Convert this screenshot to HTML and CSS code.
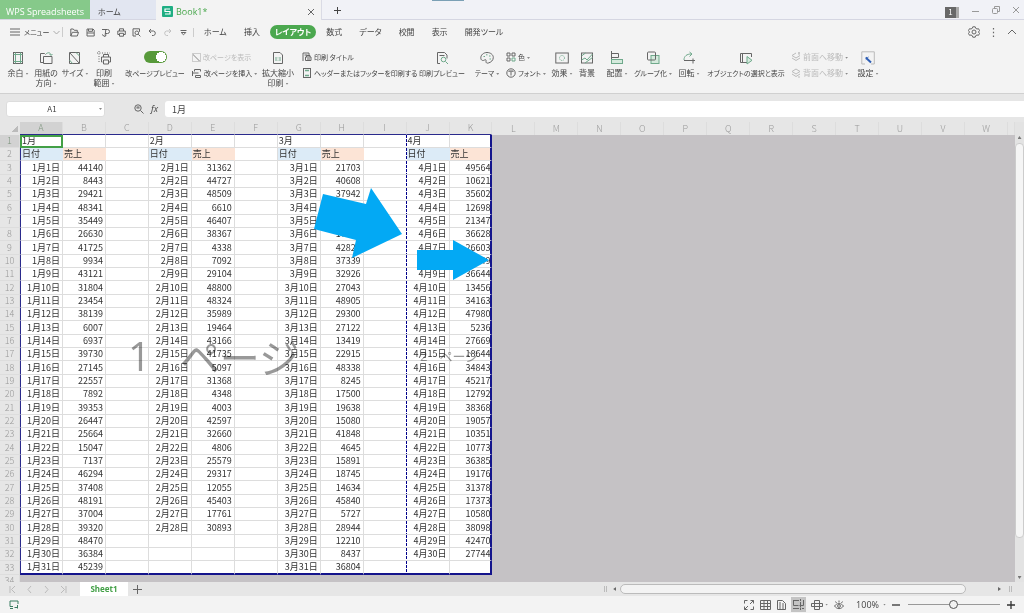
FILE: index.html
```html
<!DOCTYPE html>
<html lang="ja">
<head>
<meta charset="utf-8">
<meta name="viewport" content="width=device-width, initial-scale=1">
<title>Book1 - WPS Spreadsheets</title>
<link rel="stylesheet" href="styles.css">
</head>
<body>
<header class="titlebar">
  <button class="app-tab">WPS Spreadsheets</button>
  <button class="home-tab">ホーム</button>
  <div class="doc-tab">
    <svg class="doc-logo" width="11" height="11" viewBox="0 0 11 11"><rect width="11" height="11" rx="1" fill="#1fae83"/><path d="M8 3H3v2.500h5V8H3" fill="none" stroke="#fff" stroke-width="1.200"/></svg>
    <span>Book1*</span>
    <button class="icon-btn doc-close" aria-label="閉じる"><svg width="8" height="8" viewBox="0 0 8 8"><path d="M1 1l6 6M7 1L1 7"/></svg></button>
  </div>
  <button class="icon-btn new-tab" aria-label="新規タブ"><svg width="9" height="9" viewBox="0 0 9 9"><path d="M4.500 1v7M1 4.500h7" stroke="#444"/></svg></button>
  <div class="drag-area"><i class="drag-mark"></i></div>
  <div class="window-controls">
    <span class="badge">1</span>
    <button class="icon-btn" aria-label="最小化"><svg width="8" height="8" viewBox="0 0 8 8"><path d="M0 5.500h7"/></svg></button>
    <button class="icon-btn" aria-label="元に戻す"><svg width="8" height="8" viewBox="0 0 8 8"><rect x=".5" y="2.500" width="5" height="5" rx="1"/><path d="M2.500 2V.5h5v5H6"/></svg></button>
    <button class="icon-btn" aria-label="ウィンドウを閉じる"><svg width="8" height="8" viewBox="0 0 8 8"><path d="M1 1l6 6M7 1L1 7"/></svg></button>
  </div>
</header>

<nav class="menubar">
  <button class="menu-btn"><svg width="10" height="8" viewBox="0 0 10 8"><path d="M0 1h10M0 4h10M0 7h10"/></svg>メニュー<svg class="pale" width="7" height="5" viewBox="0 0 7 5"><path d="M.5 1l3 3 3-3"/></svg></button>
  <div class="quick">
    <button class="icon-btn" aria-label="開く"><svg width="9" height="9" viewBox="0 0 9 9"><path d="M.8 8V1h2.500l1 1.300h3v2M.8 8l1.500-3.700h6.200L7.300 8z"/></svg></button>
    <button class="icon-btn" aria-label="保存"><svg width="9" height="9" viewBox="0 0 9 9"><path d="M1 1h6l1.200 1.200V8H1zM2.500 1v2.300h4V1M1 5h7"/></svg></button>
    <button class="icon-btn" aria-label="PDF出力"><svg width="9" height="9" viewBox="0 0 9 9"><path d="M1 1.500h5.500a1.500 1.500 0 010 4H4M4 8.500l.8-7M1 6.500l2.500 2L5.500 7"/></svg></button>
    <button class="icon-btn" aria-label="印刷"><svg width="9" height="9" viewBox="0 0 9 9"><path d="M2.500 3V.8h4V3M2 6.500H.8V3h7.500v3.500H7M2.500 5.300h4V8.200h-4z"/></svg></button>
    <button class="icon-btn" aria-label="印刷プレビュー"><svg width="9" height="9" viewBox="0 0 9 9"><path d="M4 8H1V.8h6.500v3"/><circle cx="4.800" cy="4.800" r="1.800"/><path d="M6.200 6.200L8.400 8.400"/></svg></button>
    <button class="icon-btn" aria-label="元に戻す操作"><svg width="9" height="9" viewBox="0 0 9 9"><path d="M3 1L1 3l2 2M1 3h4.500a2.300 2.300 0 010 4.500H4"/></svg></button>
    <button class="icon-btn faint" aria-label="やり直し"><svg width="9" height="9" viewBox="0 0 9 9"><path d="M6 1l2 2-2 2M8 3H3.500a2.300 2.300 0 000 4.500H5"/></svg></button>
    <button class="icon-btn" aria-label="カスタマイズ"><svg width="9" height="9" viewBox="0 0 9 9"><path d="M1.500 2.500h6M2.200 4.500h4.600L4.500 6.800z"/></svg></button>
  </div>
  <div class="tabs">
    <button>ホーム</button><button>挿入</button><button class="on">レイアウト</button><button>数式</button><button>データ</button><button>校閲</button><button>表示</button><button>開発ツール</button>
  </div>
  <div class="menu-right">
    <button class="icon-btn" aria-label="設定"><svg width="12" height="12" viewBox="0 0 12 12"><path d="M4.800.8h2.400l.5 1.500 1.300.7 1.500-.3 1 1.800L10.500 6l1 1.500-1 1.800L9 9l-1.300.7-.5 1.500H4.800l-.5-1.500L3 9l-1.500.3-1-1.800L1.500 6l-1-1.500 1-1.800L3 3l1.300-.7z"/><circle cx="6" cy="6" r="2"/></svg></button>
    <button class="icon-btn" aria-label="その他"><svg width="3" height="9" viewBox="0 0 3 9"><path d="M1.500 0v9" stroke-width="1.200" stroke-dasharray="1.500 2.200"/></svg></button>
    <button class="icon-btn" aria-label="リボンを折りたたむ"><svg width="10" height="6" viewBox="0 0 10 6"><path d="M1 5l4-4 4 4"/></svg></button>
  </div>
</nav>

<section class="ribbon" aria-label="レイアウト">
  <button class="tool w28"><svg width="14" height="14" viewBox="0 0 14 14"><rect x="2.500" y="1.500" width="9" height="11"/><path class="g" d="M4.500 1.500v11M9.500 1.500v11M2.500 3.500h9M2.500 10.500h9"/></svg><span>余白<i class="car"></i></span></button>
  <button class="tool w28"><svg width="14" height="14" viewBox="0 0 14 14"><path d="M1.500 11.500V2.500h4l1 1M4.500 5.500h8.500v7H4.500zM1.500 11.500h3"/><path class="g" d="M7 3c2-2 4.500-1.500 5 1M10.500 3l1.500 1.500L13.500 3"/></svg><span>用紙の<br>方向<i class="car"></i></span></button>
  <button class="tool w30"><svg width="14" height="14" viewBox="0 0 14 14"><path d="M1.500 12.500v-11h10v11zM2 2l9 10"/><path class="g" d="M8 1.500l3.500 3.500M4.500 12.500L1.500 9"/></svg><span>サイズ<i class="car"></i></span></button>
  <button class="tool w28"><svg width="14" height="14" viewBox="0 0 14 14"><path d="M6.500 6V3.500h5V6M5.500 11h-1V6h9v5h-1.500M6.500 9h5v4h-5z"/><path d="M2 0v12M0 2h13" stroke-dasharray="1 1.500"/></svg><span>印刷<br>範囲<i class="car"></i></span></button>
  <label class="tool small w74"><input class="switch" type="checkbox" checked><span>改ページプレビュー</span></label>
  <div class="stack small w68">
    <label class="disabled"><input class="tick" type="checkbox" checked disabled><span>改ページを表示</span></label>
    <button><svg width="10" height="10" viewBox="0 0 10 10"><path d="M2.500 3.500v-2h6v2M.5 5h6M3.500 9.500v-2h5v2zM.5 3v5"/></svg><span>改ページを挿入<i class="car"></i></span></button>
  </div>
  <button class="tool w36"><svg width="14" height="14" viewBox="0 0 14 14"><path d="M2.500 1.500h6.500l2.500 2.500v8.500h-9z"/><path class="g" d="M5 6v4M9 6v4M7 6.500v.8M7 8.800v.8"/></svg><span>拡大縮小<br>印刷<i class="car"></i></span></button>
  <div class="stack small w120">
    <button><svg width="10" height="10" viewBox="0 0 10 10"><path d="M1 9V1h6v2M2.500 3h3M3.500 5h5.500v3.500H3.500zM4.500 5V3.500h3.500V5M5 7h3"/></svg><span>印刷 タイトル</span></button>
    <button><svg width="10" height="10" viewBox="0 0 10 10"><rect x="1.500" y=".5" width="7" height="9"/><path class="g" d="M3 2.500h4M3 7.500h4" stroke-width="1.500"/></svg><span>ヘッダーまたはフッターを印刷する</span></button>
  </div>
  <button class="tool small w52"><svg width="14" height="14" viewBox="0 0 14 14"><path d="M5 12.500H2.500v-11h7l2.500 2.500v3.500M4.500 4.500h5"/><path class="g" d="M10.500 10.500l2.500 2.500"/><circle class="g" cx="8.500" cy="8.500" r="2.300"/></svg><span>印刷プレビュー</span></button>
  <button class="tool small w38"><svg width="14" height="14" viewBox="0 0 14 14"><path d="M7 1.500C3.500 1.500.8 4 .8 6.800S3 10 4.500 9s1.800.3 1.500 1.500 1 2 2.300 1.500c2.700-.6 5-2.700 5-5.500S10.500 1.500 7 1.500z"/><path class="g" d="M3.500 5.500h1.500M6 3.800h1.500M9 5h1.500M9.500 8H11"/></svg><span>テーマ<i class="car"></i></span></button>
  <div class="stack small w44">
    <button><svg width="10" height="10" viewBox="0 0 10 10"><path d="M1 1h3v3H1zM6 1h3v3H6zM1 6h3v3H1z"/><path class="g" d="M6 6h3v3H6z"/></svg><span>色<i class="car"></i></span></button>
    <button><svg width="10" height="10" viewBox="0 0 10 10"><circle cx="5" cy="5" r="4.200"/><path d="M3 4V3h4v1M5 3v4.500"/></svg><span>フォント<i class="car"></i></span></button>
  </div>
  <button class="tool w24"><svg width="14" height="14" viewBox="0 0 14 14"><rect x=".8" y="2" width="12.500" height="10"/><circle class="g" cx="7" cy="7" r="2.500" stroke-dasharray="1 1"/></svg><span>効果<i class="car"></i></span></button>
  <button class="tool w26"><svg width="14" height="14" viewBox="0 0 14 14"><rect x="1.500" y="2" width="11" height="10"/><path class="g" d="M1.500 5l4-3M1.500 9l3.500-2 2 2 5.500-6M5 12l7.500-5.500"/></svg><span>背景</span></button>
  <button class="tool w34"><svg width="14" height="14" viewBox="0 0 14 14"><path d="M1.500 0v13M1.500 2.500h7v4h-7"/><rect class="gf" x="1.500" y="8.500" width="11" height="4"/></svg><span>配置<i class="car"></i></span></button>
  <button class="tool small w38"><svg width="14" height="14" viewBox="0 0 14 14"><rect class="gf" x="5" y="4.500" width="8" height="8"/><rect x="1.500" y="1" width="8" height="8" rx="1"/></svg><span>グループ化<i class="car"></i></span></button>
  <button class="tool w34"><svg width="14" height="14" viewBox="0 0 14 14"><path d="M2 9.500h11M11 7.500v5"/><path class="g" d="M2 9c0-4 3-6 7-6M7.500 1L10 3 7.500 5.500"/></svg><span>回転<i class="car"></i></span></button>
  <button class="tool small w80"><svg width="14" height="14" viewBox="0 0 14 14"><path d="M8 11.500H1.500v-9h11V6M3.500 2.500v9"/><path class="gf" d="M8 5.500v7.500l5-3.700z"/></svg><span>オブジェクトの選択と表示</span></button>
  <div class="stack w66 disabled">
    <button disabled><svg width="10" height="10" viewBox="0 0 10 10"><path d="M5 1L1 3.500l4 2.500 4-2.500M1 6l4 2.500L9 6M7 1h2M8 0v3"/></svg><span>前面へ移動<i class="car"></i></span></button>
    <button disabled><svg width="10" height="10" viewBox="0 0 10 10"><path d="M5 1L1 3.500l4 2.500 4-2.500zM1 6l4 2.500L9 6M7 9h2"/></svg><span>背面へ移動<i class="car"></i></span></button>
  </div>
  <button class="tool w32"><svg width="14" height="14" viewBox="0 0 14 14"><path d="M4 13H.8V.8h12.500V13H10" stroke="#bbb"/><path d="M4.800 6.300l1.500 1.700L10 11.500" stroke="#2f5fb5" stroke-width="2"/><path d="M7.500 6L4.800 8.500" stroke="#2f5fb5"/></svg><span>設定<i class="car"></i></span></button>
</section>

<div class="formula">
  <label class="namebox"><input value="A1" aria-label="名前ボックス"><i class="car"></i></label>
  <div class="fx">
    <button class="icon-btn" aria-label="検索"><svg width="10" height="10" viewBox="0 0 10 10"><circle cx="4" cy="4" r="3.200"/><path d="M6.500 6.500l3 3M2.500 4h3M2.500 3h3"/></svg></button>
    <button class="fx-btn">fx</button>
  </div>
  <input class="formula-input" value="1月" aria-label="数式バー">
</div>

<main class="sheet">
  <div class="grid-area">
    <table class="grid" id="grid"></table>
    <div class="mark mark-big"><span class="digit">1</span><span>ページ</span></div>
    <div class="mark mark-small"><span class="digit">2</span><span>ページ</span></div>
    <svg class="arrows" width="492" height="180" viewBox="0 0 492 180"><path d="M323 72L366 82L371 66L402 112L352 136L356 118L314 107zM417 128h36v-10l36 20-36 20v-10h-36z"/></svg>
  </div>
  <div class="vscroll"><i class="up"></i><div class="vthumb"></div><i class="down"></i></div>
</main>

<div class="sheetbar">
  <div class="sheet-nav">
    <button class="icon-btn" aria-label="最初"><svg width="7" height="9" viewBox="0 0 7 9"><path d="M1 1v7M6 1L2.500 4.500 6 8"/></svg></button>
    <button class="icon-btn" aria-label="前"><svg width="7" height="9" viewBox="0 0 7 9"><path d="M5 1L2 4.500 5 8"/></svg></button>
    <button class="icon-btn" aria-label="次"><svg width="7" height="9" viewBox="0 0 7 9"><path d="M2 1l3 3.500L2 8"/></svg></button>
    <button class="icon-btn" aria-label="最後"><svg width="7" height="9" viewBox="0 0 7 9"><path d="M1 1l3.500 3.500L1 8M6 1v7"/></svg></button>
  </div>
  <button class="sheet-tab">Sheet1</button>
  <button class="icon-btn add-sheet" aria-label="シートを追加"><svg width="9" height="9" viewBox="0 0 9 9"><path d="M4.500 0v9M0 4.500h9"/></svg></button>
  <div class="hscroll"><i class="grip"></i><i class="left"></i><div class="hthumb"></div><i class="right"></i><i class="grip"></i></div>
</div>

<footer class="status">
  <button class="icon-btn rec" aria-label="マクロ"><svg width="10" height="9" viewBox="0 0 10 9"><path d="M4 6.500H1V1h8v3M1 8.500h3M5.500 7.500h3M8.500 5v3.500" stroke="#3b7d62"/></svg></button>
  <div class="views">
    <button class="icon-btn" aria-label="全画面"><svg width="10" height="10" viewBox="0 0 10 10"><path d="M.5 3.500v-3h3M6.500.5h3v3M9.500 6.500v3h-3M3.500 9.500h-3v-3M9.500.5L6 4M.5 9.500L4 6"/></svg></button>
    <button class="icon-btn" aria-label="標準"><svg width="11" height="10" viewBox="0 0 11 10"><path d="M.5.5h10v9H.5zM.5 3.500h10M.5 6.500h10M4 .5v9M7.500.5v9"/></svg></button>
    <button class="icon-btn" aria-label="ページレイアウト"><svg width="9" height="10" viewBox="0 0 9 10"><path d="M.5.5h5l3 3v6h-8zM3 2v7.500M6 3v6.500"/></svg></button>
    <button class="icon-btn on" aria-label="改ページプレビュー表示"><svg width="11" height="11" viewBox="0 0 11 11"><path d="M.5 1v5.500h5M1 1.500h5M7.500 0v2M7.500 3v5M10.500 1v5.500H6.500M0 9.500h6M7.500 8.500V11M9 9.500h2"/></svg></button>
    <button class="icon-btn" aria-label="読み取りモード"><svg width="12" height="10" viewBox="0 0 12 10"><path d="M3.500.5h5v9h-5zM3.500 3.500H.5v3h3M8.500 3.500h3v3h-3M3.500 3.500h5M3.500 6.500h5"/></svg><i class="car"></i></button>
    <button class="icon-btn" aria-label="目の保護モード"><svg width="10" height="10" viewBox="0 0 10 10"><path d="M.5 6C3 2.800 7 2.800 9.500 6 7 9.500 3 9.500.5 6zM1.500 1.500l1 1.500M5 .5v2M8.500 1.500l-1 1.500"/><circle cx="5" cy="6" r="1.400"/></svg></button>
  </div>
  <button class="zoom-val">100%<i class="car"></i></button>
  <button class="icon-btn" aria-label="縮小"><svg width="8" height="8" viewBox="0 0 8 8"><path d="M0 4h8" stroke="#333" stroke-width="1.300"/></svg></button>
  <input class="zoom" type="range" min="0" max="100" value="49" aria-label="ズーム">
  <button class="icon-btn" aria-label="拡大"><svg width="8" height="8" viewBox="0 0 8 8"><path d="M0 4h8M4 0v8" stroke="#333" stroke-width="1.300"/></svg></button>
</footer>
<script src="app.js"></script>
</body>
</html>
```

FILE: styles.css
```css
* { box-sizing: border-box; }
html, body { height: 100%; }
body {
  margin: 0;
  display: flex;
  flex-direction: column;
  overflow: hidden;
  background: #e6e6e6;
  color: #444;
  font: 8px/10px "Noto Sans CJK JP", sans-serif;
}
button, input { font: inherit; color: inherit; margin: 0; padding: 0; border: 0; background: none; }
button { white-space: nowrap; }
svg { display: block; flex: none; fill: none; stroke: #666; stroke-width: 1; }
.icon-btn { display: flex; align-items: center; justify-content: center; }
svg .g { stroke: #6fa98b; }
svg .gf { stroke: #6fa98b; fill: #d5eadd; }
.car {
  display: inline-block;
  width: 3px;
  height: 2px;
  margin-left: 2px;
  vertical-align: middle;
  background: #888;
  clip-path: polygon(0 0, 100% 0, 50% 100%);
}

/* title bar */
.titlebar { flex: none; display: flex; height: 20px; background: #f1f2f7; border-bottom: 1px solid #d5d6e2; }
.app-tab { width: 90px; height: 19px; padding-top: 4px; background: #86c98a; color: #fff; font: 9px/12px "Open Sans", sans-serif; }
.home-tab { width: 66px; padding: 4px 0 0 8px; text-align: left; background: #e2e6f1; font-feature-settings: "palt"; }
.doc-tab {
  display: flex; align-items: center; gap: 3px; width: 166px; height: 20px; padding: 3px 6px 0;
  background: #f3f3f3; border-right: 1px solid #dadbe5; color: #4aa84e; font: 9px/12px "Open Sans", sans-serif;
}
.doc-logo { stroke: none; }
.doc-close { margin-left: auto; }
.new-tab { width: 30px; padding-top: 2px; }
.drag-area { flex: 1; padding-left: 80px; }
.drag-mark { display: block; width: 32px; height: 1px; background: #7ba0b5; }
.window-controls { display: flex; align-items: center; gap: 12px; padding-right: 4px; }
.window-controls svg { stroke: #999; }
.badge { width: 14px; height: 11px; margin: 5px 1px 0 0; background: #686868; border-right: 3px solid #aaa; color: #fff; text-align: center; }

/* menu bar */
.menubar { flex: none; display: flex; align-items: center; height: 24px; background: #f3f3f3; font-feature-settings: "palt"; }
.menu-btn { display: flex; align-items: center; gap: 4px; width: 63px; padding-left: 10px; border-right: 1px solid #ccc; font-size: 7px; }
.pale { stroke: #aaa; }
.quick { display: flex; justify-content: space-between; width: 131px; padding: 0 5px 0 7px; border-right: 1px solid #ccc; }
.faint { opacity: .35; }
.tabs { display: flex; align-items: center; gap: 17px; padding-left: 10px; }
.tabs .on { height: 14px; padding: 0 5px; margin: 0 -7px; border-radius: 7px; background: #4ba84f; color: #fff; font-weight: 700; }
.menu-right { display: flex; align-items: center; gap: 12px; margin-left: auto; padding-right: 7px; }

/* ribbon */
.ribbon { flex: none; display: flex; height: 50px; padding: 7px 0 0 4px; background: #f3f3f3; border-bottom: 1px solid #d0d0d0; font-feature-settings: "palt"; }
.tool { flex: none; display: flex; flex-direction: column; align-items: center; gap: 3px; text-align: center; white-space: nowrap; }
.stack { flex: none; display: flex; flex-direction: column; gap: 6px; padding-top: 1px; white-space: nowrap; }
.stack > * { display: flex; align-items: center; gap: 2px; height: 10px; }
.small { font-size: 7px; }
.disabled { color: #bbb; }
.disabled svg { stroke: #bbb; }
.w24 { width: 24px; } .w26 { width: 26px; } .w28 { width: 28px; } .w30 { width: 30px; }
.w32 { width: 32px; } .w34 { width: 34px; } .w36 { width: 36px; } .w38 { width: 38px; }
.w44 { width: 44px; } .w52 { width: 52px; } .w66 { width: 66px; padding-left: 5px; }
.w68 { width: 68px; } .w74 { width: 74px; } .w80 { width: 80px; } .w120 { width: 120px; padding-left: 6px; }
.switch { appearance: none; width: 23px; height: 12px; margin: 0 0 2px; border-radius: 6px; background: radial-gradient(circle at 17px 6px, #fff 5px, #57993a 5px); }
.tick { appearance: none; width: 9px; height: 9px; border: 1px solid #ccc; background: linear-gradient(45deg, transparent 40%, #bbb 40% 55%, transparent 55%); }

/* formula bar */
.formula { flex: none; display: flex; align-items: center; height: 28px; padding-top: 2px; }
.namebox { display: flex; align-items: center; width: 99px; height: 16px; margin-left: 6px; padding-right: 2px; background: #fff; border-radius: 3px; border: 1px solid #ddd; }
.namebox input { flex: 1; min-width: 0; text-align: center; }
.fx { display: flex; align-items: center; gap: 7px; width: 60px; padding-left: 29px; }
.fx-btn { font: italic 9px/12px "Open Sans", sans-serif; }
.formula-input { flex: 1; height: 16px; padding-left: 7px; background: #fff; border-radius: 3px 0 0 3px; font-size: 9px; }

/* sheet */
.sheet { flex: 1; min-height: 0; display: flex; overflow: hidden; }
.grid-area { position: relative; flex: 1; min-width: 0; overflow: hidden; background: #c5c2c5; }
.grid { width: 100%; table-layout: fixed; border-collapse: separate; border-spacing: 0; font-size: 9px; line-height: 12px; color: #333; }
.grid th, .grid td { padding: 0; height: 13px; overflow: hidden; white-space: nowrap; }
.grid tbody tr:nth-child(3n) > * { height: 14px; }
.col-num { width: 20px; }
.col-end { width: 7px; }
.grid th { background: #e6e6e6; color: #999; font-weight: 300; border-right: 1px solid #ddd; }
.grid thead th { font-size: 9px; }
.grid tbody th { border-bottom: 1px solid #ddd; }
.grid thead th.in { border-bottom: 1px solid #2a2a8c; }
.grid th.cur { background: #d2d2d2; color: #7d947d; }
.grid .corner { border: 0; background: linear-gradient(135deg, transparent 50%, #bbb 50%) 12px 4px / 6px 6px no-repeat #e6e6e6; }
.grid td.c { background: #fff; border-right: 1px solid #ddd; border-bottom: 1px solid #ddd; text-align: right; padding-right: 2px; }
.grid td.c.label { text-align: left; padding-left: 1px; }
.grid td.c.day { background: #dcebf7; border-right-color: #dcebf7; }
.grid td.c.sale { background: #fce4d6; border-right-color: #fce4d6; }
.grid td.c.first { border-left: 1px solid #2a2a8c; }
.grid td.c.brk { border-right: 0; background: repeating-linear-gradient(#00008b 0 3px, #fff 3px 4px) right / 1px 100% no-repeat #fff; }
.grid td.c.last { border-right: 2px solid #14148c; padding-right: 0; }
.grid td.c.foot { border-bottom: 2px solid #14148c; }
.grid td.c.sel { outline: 2px solid #43a047; outline-offset: -2px; }
.mark { position: absolute; display: flex; color: #999; mix-blend-mode: multiply; white-space: nowrap; }
.mark-big { left: 128px; top: 204px; gap: 29px; font-size: 40px; line-height: 60px; }
.mark-small { left: 420px; top: 225px; gap: 12px; font-size: 13px; line-height: 18px; }
.digit { font-family: "Open Sans", sans-serif; }
.arrows { position: absolute; left: 0; top: 0; fill: #03a9f4; stroke: none; }
.vscroll { flex: none; display: flex; flex-direction: column; align-items: center; width: 9px; padding: 14px 0 3px; background: #e3e3e3; }
.vthumb { flex: none; width: 9px; height: calc(100% - 48px); margin: 4px 0 auto; background: #f5f5f5; border: 1px solid #ccc; border-radius: 4px; }
.up, .down { width: 4px; height: 3px; background: #777; clip-path: polygon(50% 0, 100% 100%, 0 100%); }
.down { clip-path: polygon(0 0, 100% 0, 50% 100%); }

/* sheet tabs */
.sheetbar { flex: none; display: flex; align-items: center; height: 14px; background: #e6e6e6; }
.sheet-nav { display: flex; gap: 10px; width: 80px; padding-left: 9px; }
.sheet-nav svg { stroke: #bbb; }
.sheet-tab { width: 48px; height: 14px; background: #fff; color: #43a047; font: 700 8px/14px "Noto Sans", sans-serif; }
.add-sheet { margin-left: 5px; }
.hscroll { flex: 0 0 41%; display: flex; align-items: center; height: 14px; margin-left: auto; padding-right: 12px; }
.hthumb { flex: 1; height: 10px; margin: 0 32px 0 4px; border: 1px solid #bbb; border-radius: 5px; background: #f3f3f3; }
.grip { width: 3px; height: 6px; border: solid #bbb; border-width: 0 1px; }
.left, .right { width: 3px; height: 4px; margin-left: 6px; background: #666; clip-path: polygon(100% 0, 100% 100%, 0 50%); }
.right { margin: 0 8px 0 0; clip-path: polygon(0 0, 100% 50%, 0 100%); }

/* status bar */
.status { flex: none; display: flex; align-items: center; height: 17px; padding-right: 9px; background: #f3f3f3; }
.rec { margin: 0 auto 0 9px; }
.views { display: flex; align-items: center; gap: 6px; height: 17px; }
.views .on { width: 15px; height: 15px; margin: 0 -1px; background: #c4c4c4; }
.zoom-val { display: flex; align-items: center; gap: 2px; margin: 0 6px 0 12px; font: 9px/12px "Open Sans", sans-serif; }
.zoom { appearance: none; width: 92px; height: 12px; margin: 0 7px 0 8px; background: linear-gradient(#999, #999) center / 100% 1px no-repeat; }
.zoom::-webkit-slider-thumb { appearance: none; width: 9px; height: 9px; border: 1px solid #555; border-radius: 50%; background: #f3f3f3; }
```

FILE: app.js
```js
const sales = [
  [44140, 8443, 29421, 48341, 35449, 26630, 41725, 9934, 43121, 31804, 23454, 38139, 6007, 6937, 39730, 27145, 22557, 7892, 39353, 26447, 25664, 15047, 7137, 46294, 37408, 48191, 37004, 39320, 48470, 36384, 45239],
  [31362, 44727, 48509, 6610, 46407, 38367, 4338, 7092, 29104, 48800, 48324, 35989, 19464, 43166, 41735, 5097, 31368, 4348, 4003, 42597, 32660, 4806, 25579, 29317, 12055, 45403, 17761, 30893],
  [21703, 40608, 37942, 24510, 31876, 17254, 42827, 37339, 32926, 27043, 48905, 29300, 27122, 13419, 22915, 48338, 8245, 17500, 19638, 15080, 41848, 4645, 15891, 18745, 14634, 45840, 5727, 28944, 12210, 8437, 36804],
  [49564, 10621, 35602, 12698, 21347, 36628, 26603, 31149, 36644, 13456, 34163, 47980, 5236, 27669, 18644, 34843, 45217, 12792, 38368, 19057, 10351, 10773, 36385, 19176, 31378, 17373, 10580, 38098, 42470, 27744]
];
const letters = [..."ABCDEFGHIJKLMNOPQRSTUVW"];
const printCols = 11;
const printRows = 33;

function cell(row, col) {
  if (col >= printCols || row > printRows) return "<td></td>";
  const month = Math.floor(col / 3);
  const part = col % 3;
  const cls = ["c"];
  let text = "";
  if (part < 2) {
    if (row === 1) {
      cls.push("label");
      if (part === 0) text = `${month + 1}月`;
    } else if (row === 2) {
      cls.push("label", part ? "sale" : "day");
      text = part ? "売上" : "日付";
    } else if (sales[month][row - 3] !== undefined) {
      text = part ? sales[month][row - 3] : `${month + 1}月${row - 2}日`;
    }
  }
  if (col === 0) cls.push("first");
  if (col === 8) cls.push("brk");
  if (col === printCols - 1) cls.push("last");
  if (row === printRows) cls.push("foot");
  if (row === 1 && col === 0) cls.push("sel");
  return `<td class="${cls.join(" ")}">${text}</td>`;
}

let html = `<colgroup><col class="col-num">${"<col>".repeat(letters.length)}<col class="col-end"></colgroup><thead><tr><th class="corner"></th>`;
html += letters.map((l, i) => `<th class="${i < printCols ? "in" : ""} ${i === 0 ? "cur" : ""}">${l}</th>`).join("");
html += "<th></th></tr></thead><tbody>";
for (let row = 1; row <= printRows + 1; row++) {
  html += `<tr><th class="${row === 1 ? "cur" : ""}">${row}</th>${letters.map((_, i) => cell(row, i)).join("")}<td></td></tr>`;
}
document.getElementById("grid").innerHTML = html + "</tbody>";
```
